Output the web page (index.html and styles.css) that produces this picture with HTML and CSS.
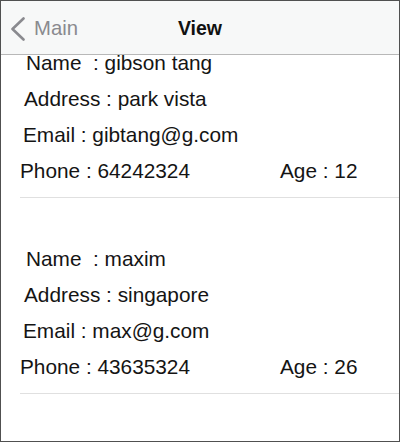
FILE: index.html
```html
<!DOCTYPE html>
<html>
<head>
<meta charset="utf-8">
<link rel="stylesheet" href="styles.css">
</head>
<body>
<div class="screen">
  <div class="list">
    <div class="item">
      <div class="row name">Name&nbsp; : gibson tang</div>
      <div class="row addr">Address : park vista</div>
      <div class="row email">Email : gibtang@g.com</div>
      <div class="row phone"><span class="phone-val">Phone : 64242324</span><span>Age : 12</span></div>
    </div>
    <div class="item">
      <div class="row name">Name&nbsp; : maxim</div>
      <div class="row addr">Address : singapore</div>
      <div class="row email">Email : max@g.com</div>
      <div class="row phone"><span class="phone-val">Phone : 43635324</span><span>Age : 26</span></div>
    </div>
  </div>
  <div class="nav">
    <div class="back">
      <svg class="chev" width="16" height="24" viewBox="0 0 16 24"><polyline points="13.5,1.5 2.5,12 13.5,22.5" fill="none" stroke="#8a8a8f" stroke-width="2.6" stroke-linecap="round" stroke-linejoin="round"/></svg>
      <span class="back-label">Main</span>
    </div>
    <div class="title">View</div>
    <div></div>
  </div>
</div>
</body>
</html>
```
FILE: styles.css
```css
html, body {
  margin: 0;
  padding: 0;
  background: #fff;
}
.screen {
  position: relative;
  width: 400px;
  height: 442px;
  box-sizing: border-box;
  border: 1px solid #505050;
  overflow: hidden;
  background: #fff;
  font-family: "Liberation Sans", Arial, sans-serif;
  color: #141414;
}
.list {
  display: flex;
  flex-direction: column;
  padding-top: 1px;
}
.item {
  margin-left: 19px;
  padding: 43px 0 8px;
  border-bottom: 1px solid #e0e0e0;
  font-size: 20.8px;
  line-height: 36px;
}
.row {
  white-space: nowrap;
}
.name { padding-left: 6px; }
.addr { padding-left: 4px; }
.email { padding-left: 3px; }
.phone {
  display: flex;
  padding-left: 0;
}
.phone-val {
  width: 260px;
}
.nav {
  position: absolute;
  top: 0;
  left: 0;
  right: 0;
  height: 53px;
  border-bottom: 1px solid #b8b8b8;
  background: rgba(247, 248, 248, 0.97);
  display: grid;
  grid-template-columns: 1fr auto 1fr;
  align-items: center;
}
.back {
  display: flex;
  align-items: center;
  padding-left: 9px;
  gap: 8px;
  margin-top: 2px;
}
.chev {
  display: block;
}
.back-label {
  font-size: 20.3px;
  color: #8a8a8f;
}
.title {
  font-size: 19.5px;
  font-weight: bold;
  color: #111;
  margin-top: 2px;
}
```
